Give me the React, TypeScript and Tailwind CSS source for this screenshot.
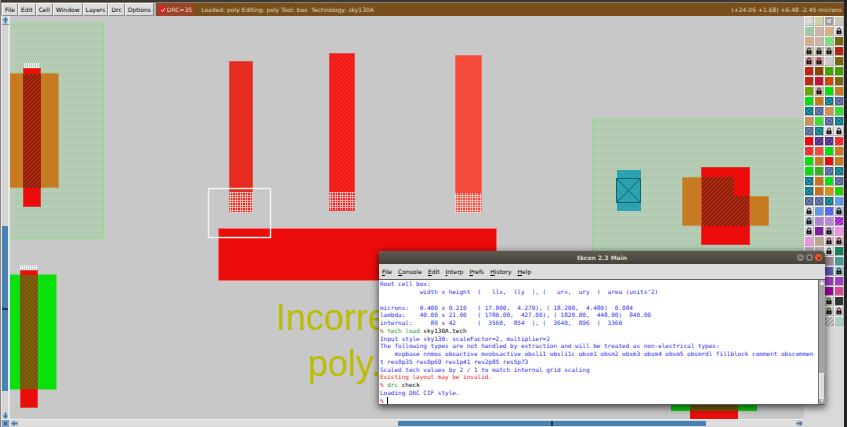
import React from "react";

type Cell = { kind: "solid" | "hatch" | "back" | "cross" | "lock" | "frame"; a: string; b?: string };

const s = (a: string): Cell => ({ kind: "solid", a });
const h = (a: string, b: string): Cell => ({ kind: "hatch", a, b });
const k = (a: string, b: string): Cell => ({ kind: "back", a, b });
const L = (a = "#dcdcdc"): Cell => ({ kind: "lock", a });
const f = (a: string, b: string): Cell => ({ kind: "frame", a, b });
const teal: Cell = { kind: "cross", a: "#1f96a2", b: "#0c6270" };
const blue: Cell = { kind: "cross", a: "#6c80b0", b: "#42568a" };
const violet: Cell = { kind: "cross", a: "#6a409c", b: "#482680" };
const GREEN = s("#06e00e");
const ORANGE = s("#c87820");
const olive = k("#8a5a10", "#3f8a10");

const LAYERS: Cell[] = [
  f("#dedede", "#cfcfcf"), f("#cccccc", "#d6d27c"), f("#c9c9c9", "#8f8f8f"), s("#c9c9b4"),
  s("#9cccA4"), s("#cfb4a4"), h("#dda878", "#d8c0a8"), L(),
  h("#d8a880", "#cdbca8"), s("#ccb4a8"), k("#6be072", "#b4dcb4"), olive,
  L("#c4bca4"), L("#c4bca4"), L("#c4bca4"), h("#c01c10", "#9c3410"),
  L("#dc9a9a"), L("#dc8a94"), s("#cccccc"), olive,
  h("#c41c10", "#a03c10"), s("#8a4400"), s("#46a200"), k("#46a200", "#3a9008"),
  h("#c42410", "#a84010"), h("#cc1030", "#b01840"), h("#d84000", "#c05a10"), olive,
  s("#68a806"), L("#dcaaa8"), GREEN, ORANGE,
  GREEN, ORANGE, teal, blue,
  teal, blue, s("#cf9050"), s("#36de34"),
  s("#cc9058"), s("#40de30"), blue, teal,
  blue, teal, L(), L(),
  s("#f20808"), violet, violet, h("#f62424", "#f05848"),
  k("#f62424", "#f05848"), s("#f44a3c"), GREEN, ORANGE,
  GREEN, ORANGE, s("#e80c0c"), ORANGE,
  GREEN, s("#34b020"), blue, teal,
  teal, s("#cc6e20"), GREEN, blue,
  teal, s("#cc7020"), s("#d49010"), s("#22d000"),
  blue, blue, teal, s("#6098e8"),
  L(), s("#6098e8"), h("#5060f4", "#7084ec"), L("#a8b8d0"),
  L("#a8c4d0"), s("#b282da"), s("#b888d8"), h("#a020d8", "#c868e0"),
  L("#d0c8dc"), h("#8818a8", "#7a2898"), L("#c8a8cc"), s("#f090e6"),
  s("#f090e0"), s("#c0a488"), L("#e0b0c4"), L("#e0a4b4"),
  s("#c4a8c0"), s("#c0b0bc"), L(), h("#187858", "#208c64"),
  s("#c0a8b8"), s("#c0a8b8"), h("#a48c9c", "#9a8090"), s("#489c9a"),
  s("#6050a0"), s("#6050a0"), h("#6454b4", "#5060a8"), L("#8cc4c8"),
  s("#9838c0"), s("#9838c0"), s("#9a3ac4"), h("#a03cc4", "#9448bc"),
  s("#a000a0"), s("#a000a0"), h("#a800a8", "#8c0894"), s("#d84890"),
  L(), L(), L("#c8ccb8"), s("#343434"),
  L(), L(), L("#ccc8b4"), L("#d8c4c0"),
  s("#c8c8c8"), s("#c8c8c8"), h("#d0d0d0", "#888888"), s("#a8d0c0"),
];

function Swatch({ cell }: { cell: Cell }) {
  const back = cell.kind === "back";
  return (
    <svg viewBox="0 0 8 8" className="block size-full" aria-hidden="true">
      <rect width="8" height="8" fill={cell.a} />
      {(cell.kind === "hatch" || back) && (
        <path
          d="M-1 4L4-1M-1 8L8-1M2 9L9 2M6 9L9 6"
          transform={back ? "translate(8 0) scale(-1 1)" : undefined}
          stroke={cell.b}
          strokeWidth="1"
        />
      )}
      {cell.kind === "frame" && <rect x="1" y="1" width="6" height="6" fill="none" stroke={cell.b} strokeWidth="1.4" />}
      {cell.kind === "cross" && (
        <path d="M.5.5h7v7h-7zM1 1l6 6M7 1L1 7" fill="none" stroke={cell.b} strokeWidth="0.8" />
      )}
      {cell.kind === "lock" && (
        <>
          <rect x="1.5" y="3.6" width="5" height="3.6" fill="#111" />
          <path d="M2.6 4V2.4a1.4 1.4 0 0 1 2.8 0V4" fill="none" stroke="#111" strokeWidth="0.8" />
          <rect x="3.6" y="4.8" width="0.9" height="1.4" fill="#999" />
        </>
      )}
    </svg>
  );
}

function Arrow({ turn }: { turn: string }) {
  return (
    <svg viewBox="0 0 7 7" className={`block size-[7px] ${turn}`} aria-hidden="true">
      <path d="M3.5 0L6.6 3.4H4.5V6.6H2.5V3.4H.4z" fill="#4682b4" />
    </svg>
  );
}

function Canvas() {
  return (
    <svg className="absolute inset-0 size-full" role="img" aria-label="Layout">
      <defs>
        <pattern id="well" width="4" height="8" patternUnits="userSpaceOnUse">
          <rect width="4" height="8" fill="#c0c8c0" />
          <path d="M0 .5h1M2 .5h1M1 2.5h1M3 2.5h1M0 4.5h1M2 4.5h1" stroke="#84da84" />
          <path d="M0 6.5h4" stroke="#acd2ac" />
          <path d="M0 3.5h4" stroke="#c8c2c8" />
        </pattern>
        <pattern id="pfet" width="4" height="4" patternUnits="userSpaceOnUse">
          <rect width="4" height="4" fill="#a80c0a" />
          <path d="M-1 1L1-1M-1 5L5-1M3 5L5 3" stroke="#8a4c14" strokeWidth="1.2" />
        </pattern>
        <pattern id="nfet" width="4" height="4" patternUnits="userSpaceOnUse">
          <rect width="4" height="4" fill="#94400c" />
          <path d="M-1 3L1 5M-1-1L5 5M3-1L5 1" stroke="#4a880c" strokeWidth="1.2" />
        </pattern>
        <pattern id="resA" width="4" height="4" patternUnits="userSpaceOnUse">
          <rect width="4" height="4" fill="#fa1c10" />
          <path d="M-1 3L1 5M-1-1L5 5M3-1L5 1" stroke="#cc4434" strokeWidth="1.2" />
        </pattern>
        <pattern id="resB" width="4" height="4" patternUnits="userSpaceOnUse">
          <rect width="4" height="4" fill="#fc1010" />
          <path d="M-1 3L1 5M-1-1L5 5M3-1L5 1" stroke="#e4342c" strokeWidth="1.2" />
        </pattern>
        <pattern id="drc" width="5" height="5" patternUnits="userSpaceOnUse">
          <path d="M0 .5h5M0 2.5h5M.5 0v5M2.5 0v5" stroke="#fff" strokeOpacity="0.55" />
        </pattern>
        <pattern id="ticks" width="2" height="5" patternUnits="userSpaceOnUse">
          <path d="M.5 0v5" stroke="#fff" strokeOpacity="0.7" />
          <path d="M0 2.5h2" stroke="#fff" strokeOpacity="0.5" />
        </pattern>
      </defs>
      <g transform="translate(-10 -16)">
        <rect x="8.5" y="22.5" width="95" height="216" fill="url(#well)" stroke="#8fdc8f" />
        <rect x="8.5" y="73.5" width="50" height="114" fill="#c67a22" stroke="#c89850" />
        <rect x="23.5" y="68.5" width="17" height="138" fill="#ec0c0c" stroke="#d03c34" />
        <rect x="23" y="74" width="18" height="114" fill="url(#pfet)" />
        <rect x="24" y="63" width="16" height="5" fill="url(#ticks)" />

        <rect x="8.5" y="274.5" width="48" height="115" fill="#0ce00c" stroke="#6cd86c" />
        <rect x="20.5" y="270.5" width="17" height="137" fill="#ec0c0c" stroke="#d84c44" />
        <rect x="20" y="275" width="18" height="114" fill="url(#nfet)" />
        <rect x="20" y="265" width="18" height="5" fill="url(#ticks)" />

        <rect x="229.5" y="61.5" width="23" height="151" fill="url(#resA)" stroke="#dc5048" />
        <rect x="229" y="192" width="24" height="21" fill="url(#drc)" />
        <rect x="329.5" y="53.5" width="25" height="157" fill="url(#resB)" stroke="#e05048" />
        <rect x="329" y="192" width="26" height="18" fill="url(#drc)" />
        <rect x="455.5" y="55.5" width="26" height="157" fill="#f44a3c" stroke="#e87068" />
        <rect x="455" y="193" width="27" height="20" fill="url(#drc)" />

        <rect x="218.5" y="228.5" width="278" height="52" fill="#ec0c0c" stroke="#f06c64" />
        <rect x="208.5" y="188.5" width="62" height="49" fill="none" stroke="#f4f4f4" strokeWidth="1.4" />

        <rect x="592.5" y="118.5" width="230" height="200" fill="url(#well)" stroke="#8fdc8f" />
        <rect x="617" y="170" width="24" height="41" fill="#2aa2b2" />
        <path d="M616.5 178.5h24v24h-24zl24 24M640.5 178.5l-24 24" fill="none" stroke="#14606a" />
        <path d="M682.5 177.5h51v19h35v29h-86z" fill="#c67a22" stroke="#c89048" />
        <rect x="701.5" y="167.5" width="48" height="77" fill="#ec0c0c" stroke="#d83830" />
        <path d="M702 177h32v19h15v30h-47z" fill="url(#pfet)" />

        <rect x="671" y="380" width="86" height="31" fill="#0cd00c" />
        <rect x="690" y="380" width="48" height="39" fill="#ec0c0c" />
        <rect x="690" y="380" width="48" height="31" fill="url(#nfet)" />

        <g fill="#bcbc04" className="font-['Liberation_Sans',sans-serif] text-[36px]">
          <text x="276" y="330">Incorre</text>
          <text x="308" y="376">poly.</text>
        </g>
      </g>
    </svg>
  );
}

const MENUS = ["File", "Edit", "Cell", "Window", "Layers", "Drc", "Options"];
const CONSOLE_MENUS = ["File", "Console", "Edit", "Interp", "Prefs", "History", "Help"];

type Line = [string, string][];
const BLUE = "text-[#2c2cf4]";
const LINES: Line[] = [
  [[BLUE, "Root cell box:"]],
  [[BLUE, "           width x height  (   llx,  lly  ), (   urx,  ury  )  area (units^2)"]],
  [[BLUE, ""]],
  [[BLUE, "microns:   0.400 x 0.210   ( 17.800,  4.270), ( 18.200,  4.480)  0.084"]],
  [[BLUE, "lambda:    40.00 x 21.00   ( 1780.00,  427.00), ( 1820.00,  448.00)  840.00"]],
  [[BLUE, "internal:     80 x 42      (  3560,  854  ), (  3640,  896  )  3360"]],
  [["text-[#b04040]", "% "], ["text-[#18a018]", "tech load "], ["text-black", "sky130A.tech"]],
  [[BLUE, "Input style sky130: scaleFactor=2, multiplier=2"]],
  [[BLUE, "The following types are not handled by extraction and will be treated as non-electrical types:"]],
  [[BLUE, "    mvpbase nnmos obsactive mvobsactive obsli1 obsli1c obsm1 obsm2 obsm3 obsm4 obsm5 obsmrdl fillblock comment obscommen"]],
  [[BLUE, "t res0p35 res0p69 res1p41 res2p85 res5p73"]],
  [[BLUE, "Scaled tech values by 2 / 1 to match internal grid scaling"]],
  [["text-[#f82020]", "Existing layout may be invalid."]],
  [["text-[#b04040]", "% "], ["text-[#18a018]", "drc "], ["text-black", "check"]],
  [[BLUE, "Loading DRC CIF style."]],
];

function Console() {
  return (
    <section className="absolute left-[379px] top-[251px] flex h-[154px] w-[446px] flex-col rounded-t-[4px] bg-[#dcdcdc] shadow-[0_2px_7px_1px_rgba(0,0,0,0.6)]">
      <header className="flex h-[13px] shrink-0 items-center rounded-t-[4px] bg-linear-to-b from-[#5c5a50] to-[#44423b] px-[2px]">
        <div className="w-[26px]" />
        <h1 className="flex-1 text-center text-[6px] leading-[8px] font-bold text-[#dcd6c8]">tkcon 2.3 Main</h1>
        <div className="flex gap-[2px] pr-px">
          <button aria-label="Minimize" className="grid size-[7px] place-items-center rounded-full bg-[#85827a]">
            <span className="h-px w-[3px] bg-[#44423b]" />
          </button>
          <button aria-label="Maximize" className="grid size-[7px] place-items-center rounded-full bg-[#85827a]">
            <span className="size-[3px] border border-[#44423b]" />
          </button>
          <button aria-label="Close" className="grid size-[7px] place-items-center rounded-full bg-[#ee5a2a]">
            <svg viewBox="0 0 4 4" className="size-[4px]" aria-hidden="true">
              <path d="M.5.5l3 3M3.5.5l-3 3" stroke="#5c2410" strokeWidth="1" />
            </svg>
          </button>
        </div>
      </header>
      <nav className="flex h-[15px] shrink-0 items-center gap-[6px] px-[3px] text-[6px] leading-[8px] text-black">
        {CONSOLE_MENUS.map((m) => (
          <button key={m}>
            <span className="underline">{m[0]}</span>
            {m.slice(1)}
          </button>
        ))}
      </nav>
      <div className="flex min-h-0 flex-1 border-t border-b border-[#606060]">
        <div className="flex min-w-0 flex-1 flex-col overflow-hidden border-r border-[#707070] bg-white pl-px font-['DejaVu_Sans_Mono',monospace] text-[6px] leading-[7px]">
          {LINES.map((line, i) => (
            <div key={i} className="flex flex-1 items-center whitespace-pre">
              {line.map(([c, t], j) => (
                <span key={j} className={c}>{t}</span>
              ))}
            </div>
          ))}
          <label className="flex flex-1 items-center whitespace-pre text-[#b04040]">
            {"% "}
            <span className="h-[7px] w-px bg-black" />
            <input aria-label="Command" className="h-[7px] min-w-0 flex-1 text-black outline-none" />
          </label>
        </div>
        <div className="flex w-[6px] flex-col items-center bg-[#a4a4a4]">
          <svg viewBox="0 0 6 5" className="h-[5px] w-[6px]" aria-hidden="true">
            <path d="M3 0L5.5 5H.5z" fill="#e4e4e4" />
          </svg>
          <div className="flex-[90]" />
          <div className="w-full flex-[24] border border-[#f0f0f0] border-r-[#909090] bg-[#dcdcdc]" />
          <svg viewBox="0 0 6 5" className="h-[5px] w-[6px]" aria-hidden="true">
            <path d="M3 5L5.5 0H.5z" fill="#dcdcdc" stroke="#808080" strokeWidth="0.6" />
          </svg>
        </div>
      </div>
    </section>
  );
}

export default function App() {
  return (
    <div className="relative flex h-screen overflow-hidden bg-[#242424] font-['DejaVu_Sans',sans-serif]">
      <main className="flex min-w-0 flex-1 flex-col border-l border-[#8c8484] bg-[#d9d9d9]">
        <div className="h-[2px] shrink-0 bg-[#3a3936]" />
        <header className="flex h-[14px] shrink-0 border-t border-[#8a7c68] bg-[#7a4f1c] text-[6px] leading-[8px]">
          <nav className="flex bg-[#b0b0b0] pr-[2px] pl-px">
            {MENUS.map((m) => (
              <button key={m} className="border border-[#f2f2f2] border-r-[#8c8c8c] border-b-[#8c8c8c] bg-[#dcdcdc] px-[2px] text-black">
                {m}
              </button>
            ))}
          </nav>
          <label className="flex items-center gap-px bg-[#98432a] pr-[2px] pl-[4px] text-[#f0d8cc]">
            <span className="relative grid size-[6px] place-items-center">
              <input type="checkbox" defaultChecked className="col-start-1 row-start-1 size-[6px] appearance-none bg-[#f01818]" />
              <svg viewBox="0 0 6 6" className="pointer-events-none col-start-1 row-start-1 size-[6px]" aria-hidden="true">
                <path d="M1.2 3L2.6 4.6L5 1.2" fill="none" stroke="#fff" strokeWidth="1" />
              </svg>
            </span>
            DRC=35
          </label>
          <p className="flex flex-1 items-center pl-[7px] whitespace-pre text-[#ded6bc]">
            Loaded: poly Editing: poly Tool: box  Technology: sky130A
          </p>
          <p className="flex items-center pr-[2px] text-[#ded6bc]">(+24.06 +1.68) +6.48 -2.45 microns</p>
        </header>

        <div className="flex min-h-0 flex-1">
          <div className="flex min-w-0 flex-1 flex-col">
            <div className="flex min-h-0 flex-1">
              <div className="flex w-[9px] shrink-0 flex-col items-center border-r-2 border-l border-[#e8e8e8] bg-[#d4d4d4]">
                <button aria-label="Scroll up" className="mt-px h-[8px] border-b border-[#909090]"><Arrow turn="" /></button>
                <div className="flex-[202]" />
                <div className="flex w-full flex-[165] items-center bg-[#4682b4]">
                  <div className="h-[2px] w-full bg-[#1c3c5c]" />
                </div>
                <div className="flex-[20]" />
                <button aria-label="Scroll down" className="h-[8px]"><Arrow turn="rotate-180" /></button>
              </div>
              <div className="relative min-w-0 flex-1 overflow-hidden bg-[#c8c8c8]">
                <Canvas />
              </div>
            </div>
            <div className="flex h-[8px] shrink-0 items-center border-t border-[#f0f0f0] pl-px">
              <button aria-label="Zoom" className="grid size-[7px] place-items-center bg-[#7ba0c0]">
                <span className="size-[3px] border border-[#2c649a]" />
              </button>
              <button aria-label="Scroll left" className="ml-[2px] mr-px size-[7px] bg-[#d0d0d0]"><Arrow turn="-rotate-90" /></button>
              <div className="flex h-[5px] flex-1 bg-[#dedede]">
                <div className="flex-[379]" />
                <div className="flex flex-[308] justify-center bg-[#4682b4]">
                  <div className="h-full w-[2px] bg-[#1c3c5c]" />
                </div>
                <div className="flex-[90]" />
              </div>
              <button aria-label="Scroll right" className="mr-px size-[7px] bg-[#d0d0d0]"><Arrow turn="rotate-90" /></button>
            </div>
          </div>
          <aside className="grid w-[40px] shrink-0 auto-rows-[10px] grid-cols-4 content-start">
            {LAYERS.map((cell, i) => (
              <button
                key={i}
                aria-label={`Layer ${i + 1}`}
                className="size-[10px] border border-[#f2f2f2] border-r-[#b4b4b4] border-b-[#b4b4b4]"
              >
                <Swatch cell={cell} />
              </button>
            ))}
          </aside>
        </div>
      </main>
      <div className="w-[3px] shrink-0" />
      <Console />
    </div>
  );
}
